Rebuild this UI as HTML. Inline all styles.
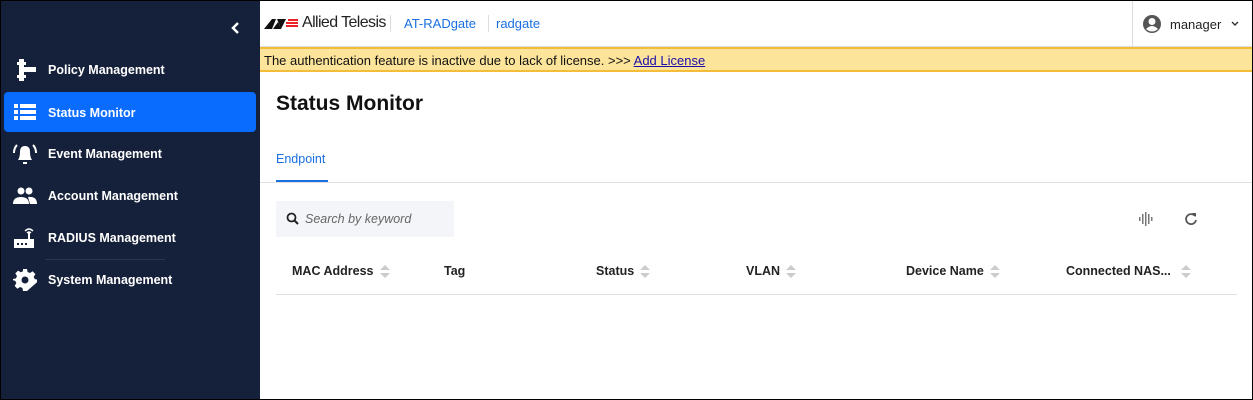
<!DOCTYPE html><html><head><style>
*{box-sizing:border-box;margin:0;padding:0}
body{width:1253px;height:400px;overflow:hidden;font-family:"Liberation Sans",sans-serif;background:#fff;position:relative}
.frame{position:absolute;inset:0;border:1px solid #000;pointer-events:none;z-index:10}
.side{position:absolute;left:0;top:0;width:260px;height:400px;background:#15213a}
.item{position:absolute;left:4px;width:252px;height:40px;border-radius:4px;color:#fff;font-size:12.5px;font-weight:bold;line-height:42px;padding-left:44px}
.item svg{position:absolute;left:9px;top:9px}
.act{background:#0a6cff}
.hdr{position:absolute;left:260px;top:0;right:0;height:47px;border-bottom:1px solid #ddd}
.ban{position:absolute;left:260px;top:47px;right:0;height:25px;background:#fde49b;border-top:2px solid #f3bd3a;border-bottom:2px solid #f3bd3a;font-size:13px;line-height:23px;padding-left:4px;color:#111}
.ban a{color:#1a0dab;text-decoration:underline}
.th{position:absolute;top:264px;font-size:12.5px;font-weight:bold;color:#222}
.sort{display:inline-block;vertical-align:middle;margin-left:6px;width:10px;height:14px;position:relative}
.sort:before,.sort:after{content:"";position:absolute;left:0;border-left:5px solid transparent;border-right:5px solid transparent}
.sort:before{top:0;border-bottom:5px solid #ccc}.sort:after{bottom:1px;border-top:5px solid #ccc}
</style></head><body>
<div class="side">
<svg style="position:absolute;left:230px;top:21px" width="12" height="14"><path d="M8 2 L3 7 L8 12" stroke="#fff" stroke-width="2.5" fill="none"/></svg>
<div class="item" style="top:49px"><svg width="24" height="24"><rect x="6" y="1" width="5" height="22" fill="#fff"/><rect x="4" y="4" width="9" height="3" fill="#fff"/><rect x="4" y="17" width="9" height="3" fill="#fff"/><rect x="11" y="9" width="12" height="5" fill="#fff"/></svg>Policy Management</div>
<div class="item act" style="top:92px"><svg width="24" height="24"><g fill="#fff"><rect x="1" y="3" width="4" height="4"/><rect x="7" y="3" width="16" height="4"/><rect x="1" y="9" width="4" height="4"/><rect x="7" y="9" width="16" height="4"/><rect x="1" y="15" width="4" height="4"/><rect x="7" y="15" width="16" height="4"/></g></svg>Status Monitor</div>
<div class="item" style="top:133px"><svg width="24" height="24"><path d="M5 18 Q7 15 7 10 Q7 4 12 4 Q17 4 17 10 Q17 15 19 18Z M10 20 h4 v2 h-4z" fill="#fff"/><path d="M4 3 Q1 6 1 11 M20 3 Q23 6 23 11" stroke="#fff" stroke-width="2" fill="none"/></svg>Event Management</div>
<div class="item" style="top:175px"><svg width="24" height="24"><circle cx="8" cy="7" r="3.5" fill="#fff"/><circle cx="16" cy="7" r="3.5" fill="#fff"/><path d="M0 20 Q0 13 8 13 Q16 13 16 20Z M15 13 Q24 12 24 20 H17Z" fill="#fff"/></svg>Account Management</div>
<div class="item" style="top:217px"><svg width="24" height="24"><rect x="1" y="13" width="20" height="9" fill="#fff"/><rect x="15" y="6" width="2" height="7" fill="#fff"/><g fill="#15213a"><rect x="4" y="17" width="2" height="2"/><rect x="8" y="17" width="2" height="2"/><rect x="12" y="17" width="2" height="2"/></g><path d="M12 5 Q16 1 20 5 M14 7 Q16 5 18 7" stroke="#fff" stroke-width="1.4" fill="none"/></svg>RADIUS Management</div>
<div style="position:absolute;left:45px;top:259px;width:120px;height:1px;background:#2a3550"></div>
<div class="item" style="top:259px"><svg width="24" height="24"><path d="M10 1h4l.6 3 2.4 1 2.6-1.7 2.8 2.8L20.7 8.7l1 2.4 3 .6v.6-.3 4-3 .6-1 2.4 1.7 2.6-2.8 2.8-2.6-1.7-2.4 1L14 23h-4l-.6-3-2.4-1-2.6 1.7-2.8-2.8L3.3 15.3l-1-2.4L0 12.3V11l3-.6 1-2.4L2.3 5.400 5.100 2.600 7.700 4.300 10 3.3z" fill="#fff"/><circle cx="12" cy="12" r="3.5" fill="#15213a"/></svg>System Management</div>
</div>
<div class="hdr">
<svg style="position:absolute;left:4px;top:18px" width="36" height="12"><path d="M0 11 L8 1 H12 L8 11Z M9 11 L14 4 L17 11Z M13 1 H22 L17 11Z" fill="#111"/><path d="M24 2h10M22 5h12M22 8h12" stroke="#e22" stroke-width="2"/></svg>
<span style="position:absolute;left:42px;top:14px;font-size:16px;color:#222;letter-spacing:-0.6px">Allied Telesis</span>
<div style="position:absolute;left:130px;top:15px;width:1px;height:17px;background:#ddd"></div>
<span style="position:absolute;left:144px;top:16px;font-size:13px;color:#1a6fe0">AT-RADgate</span>
<div style="position:absolute;left:228px;top:15px;width:1px;height:17px;background:#ddd"></div>
<span style="position:absolute;left:236px;top:16px;font-size:13px;color:#1a6fe0">radgate</span>
<div style="position:absolute;left:872px;top:0;width:1px;height:47px;background:#ddd"></div>
<svg style="position:absolute;left:882px;top:14px" width="20" height="20"><circle cx="10" cy="10" r="9" fill="#555"/><circle cx="10" cy="7.5" r="3.5" fill="#fff"/><path d="M4 15 Q10 9 16 15 Q10 20 4 15Z" fill="#fff"/></svg>
<span style="position:absolute;left:910px;top:17px;font-size:13px;color:#222">manager</span>
<svg style="position:absolute;left:971px;top:21px" width="8" height="6"><path d="M1 1 L4 4 L7 1" stroke="#333" stroke-width="1.4" fill="none"/></svg>
</div>
<div class="ban">The authentication feature is inactive due to lack of license. &gt;&gt;&gt; <a>Add License</a></div>
<div style="position:absolute;left:276px;top:92px;font-size:21px;font-weight:bold;color:#111">Status Monitor</div>
<div style="position:absolute;left:276px;top:152px;font-size:12.5px;color:#1a6fe0">Endpoint</div>
<div style="position:absolute;left:276px;top:180px;width:52px;height:3px;background:#1a6fe0"></div>
<div style="position:absolute;left:260px;top:182px;right:0;height:1px;background:#e0e0e0"></div>
<div style="position:absolute;left:276px;top:201px;width:178px;height:36px;background:#f3f5f9"></div>
<svg style="position:absolute;left:286px;top:212px" width="14" height="14"><circle cx="5.5" cy="5.5" r="4" stroke="#222" stroke-width="1.8" fill="none"/><path d="M8.5 8.5 L12 12" stroke="#222" stroke-width="2"/></svg>
<span style="position:absolute;left:305px;top:212px;font-size:12.5px;font-style:italic;color:#666">Search by keyword</span>
<svg style="position:absolute;left:1139px;top:212px" width="16" height="14"><g fill="#777"><rect x="0" y="5" width="1.5" height="4"/><rect x="3" y="2" width="1.5" height="10"/><rect x="6" y="0" width="1.5" height="14"/><rect x="9" y="2" width="1.5" height="10"/><rect x="12" y="5" width="1.5" height="4"/></g></svg>
<svg style="position:absolute;left:1184px;top:212px" width="14" height="14"><path d="M11 4 A5 5 0 1 0 12 8" stroke="#555" stroke-width="1.8" fill="none"/><path d="M8 1 H12 V5Z" fill="#555"/></svg>
<div class="th" style="left:292px">MAC Address<span class="sort"></span></div>
<div class="th" style="left:444px">Tag</div>
<div class="th" style="left:596px">Status<span class="sort"></span></div>
<div class="th" style="left:746px">VLAN<span class="sort"></span></div>
<div class="th" style="left:906px">Device Name<span class="sort"></span></div>
<div class="th" style="left:1066px">Connected NAS...<span class="sort" style="margin-left:10px"></span></div>
<div style="position:absolute;left:276px;top:294px;width:961px;height:1px;background:#e0e0e0"></div>
<div class="frame"></div>
</body></html>
